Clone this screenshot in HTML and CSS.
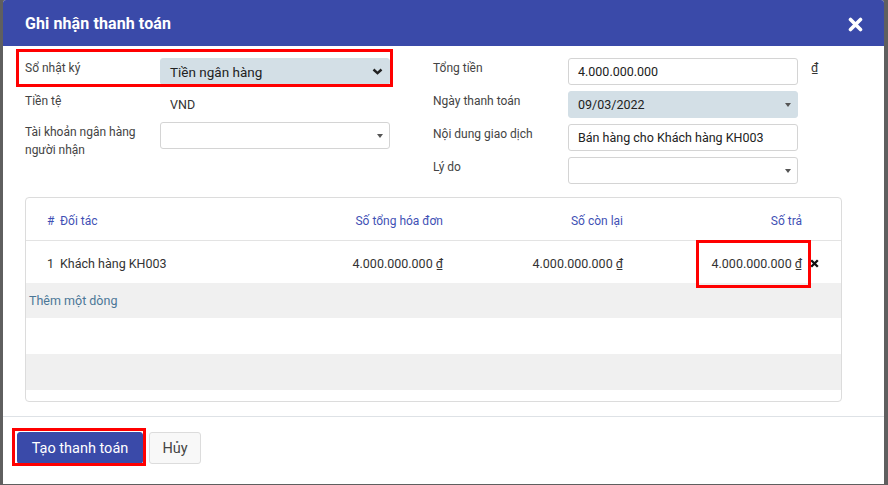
FILE: index.html
```html
<!DOCTYPE html>
<html lang="vi">
<head>
<meta charset="utf-8">
<title>Ghi nhận thanh toán</title>
<link rel="stylesheet" href="styles.css">
</head>
<body>
<div class="modal">
  <div class="modal-header">
    <h4 class="title">Ghi nhận thanh toán</h4>
    <span class="close"><svg width="15" height="15" viewBox="0 0 15 15"><path d="M2.5 2.5 L12.5 12.5 M12.5 2.5 L2.5 12.5" stroke="#fff" stroke-width="3.6" stroke-linecap="round"/></svg></span>
  </div>
  <div class="modal-body">
    <div class="form">
      <div class="col col-left">
        <div class="row hl">
          <label class="lbl">Sổ nhật ký</label>
          <div class="field filled">
            <span>Tiền ngân hàng</span>
            <svg class="chev" width="11" height="7" viewBox="0 0 11 7"><path d="M1.5 1.5 L5.5 5.2 L9.5 1.5" fill="none" stroke="#222" stroke-width="2.4"/></svg>
          </div>
        </div>
        <div class="row row-text">
          <label class="lbl">Tiền tệ</label>
          <div class="value">VND</div>
        </div>
        <div class="row">
          <label class="lbl two">Tài khoản ngân hàng người nhận</label>
          <div class="field"><span></span><span class="caret"></span></div>
        </div>
      </div>
      <div class="col col-right">
        <div class="row">
          <label class="lbl">Tổng tiền</label>
          <div class="field"><span>4.000.000.000</span></div>
          <span class="cur">₫</span>
        </div>
        <div class="row">
          <label class="lbl">Ngày thanh toán</label>
          <div class="field filled"><span>09/03/2022</span><span class="caret"></span></div>
        </div>
        <div class="row">
          <label class="lbl">Nội dung giao dịch</label>
          <div class="field"><span>Bán hàng cho Khách hàng KH003</span></div>
        </div>
        <div class="row">
          <label class="lbl">Lý do</label>
          <div class="field"><span></span><span class="caret"></span></div>
        </div>
      </div>
    </div>

    <div class="card">
      <div class="trow thead">
        <div class="c-num">#</div>
        <div class="c-partner">Đối tác</div>
        <div class="c-amt c-total">Số tổng hóa đơn</div>
        <div class="c-amt c-rest">Số còn lại</div>
        <div class="c-amt c-pay">Số trả</div>
        <div class="c-del"></div>
      </div>
      <div class="trow tdata">
        <div class="c-num">1</div>
        <div class="c-partner">Khách hàng KH003</div>
        <div class="c-amt c-total">4.000.000.000 ₫</div>
        <div class="c-amt c-rest">4.000.000.000 ₫</div>
        <div class="c-amt c-pay hl-cell">4.000.000.000 ₫</div>
        <div class="c-del"><svg width="9" height="9" viewBox="0 0 9 9"><path d="M1.2 1.2 L7.8 7.8 M7.8 1.2 L1.2 7.8" stroke="#111" stroke-width="2.3"/></svg></div>
      </div>
      <div class="trow tadd"><span class="add-link">Thêm một dòng</span></div>
      <div class="trow tempty"></div>
      <div class="trow tempty gray"></div>
    </div>
  </div>
  <div class="modal-footer">
    <button class="btn btn-primary hl-btn">Tạo thanh toán</button>
    <button class="btn btn-light">Hủy</button>
  </div>
</div>
</body>
</html>
```

FILE: styles.css
```css
* { box-sizing: border-box; }
html, body { margin: 0; height: 100%; }
body {
  background: #5f5f5f;
  font-family: Roboto, "Liberation Sans", sans-serif;
  font-size: 12.5px;
  color: #333;
  overflow: hidden;
}
.modal {
  margin-left: 3px;
  width: 881px;
  height: 484px;
  background: #fff;
  border-radius: 3px 3px 0 0;
  display: flex;
  flex-direction: column;
}
.modal-header {
  height: 46px;
  flex: none;
  background: #3a4aa9;
  border-radius: 3px 3px 0 0;
  display: flex;
  align-items: center;
  justify-content: space-between;
  padding: 0 21px 0 22px;
}
.title {
  margin: 0;
  color: #fff;
  font-size: 16px;
  font-weight: 700;
  letter-spacing: 0.1px;
}
.close { display: flex; margin-top: 2px; }

.modal-body {
  flex: 1;
  padding: 12px 42px 0 22px;
}
.form {
  display: flex;
  gap: 43px;
}
.col {
  display: flex;
  flex-direction: column;
  gap: 6px;
}
.col-left { width: 365px; }
.row {
  display: grid;
  grid-template-columns: 135px 230px;
  align-items: start;
  min-height: 27px;
}
.col-right .row { grid-template-columns: 135px 230px auto; }
.row-text { min-height: 25px; height: 25px; }
.lbl {
  color: #444;
  font-size: 12px;
  line-height: 18px;
  padding-top: 1px;
}
.lbl.two { max-width: 125px; }
.field {
  height: 27px;
  border: 1px solid #d4d4d4;
  border-radius: 3px;
  display: flex;
  align-items: center;
  justify-content: space-between;
  padding: 0 6px 0 9px;
  font-size: 12.5px;
  color: #222;
  background: #fff;
}
.field.filled {
  background: #d3dfe6;
  border-color: #d3dfe6;
}
.col-left .field.filled span { font-size: 13.5px; }
.value {
  padding: 5px 0 0 10px;
  line-height: 18px;
  font-size: 12.5px;
  color: #333;
}
.caret {
  width: 0; height: 0;
  border-left: 3.5px solid transparent;
  border-right: 3.5px solid transparent;
  border-top: 4px solid #555;
}
.cur {
  padding: 2px 0 0 13px;
  font-size: 12.5px;
  color: #333;
}
.hl, .hl-cell, .hl-btn { position: relative; }
.hl::after {
  content: "";
  position: absolute;
  left: -9px; right: -3px; top: -9px; bottom: -2px;
  border: 3px solid #ff0000;
  pointer-events: none;
}

.card {
  margin-top: 13px;
  width: 817px;
  height: 205px;
  border: 1px solid #dcdcdc;
  border-radius: 4px;
}
.trow {
  display: grid;
  grid-template-columns: 34px 233px 150px 180px 179px 1fr;
  align-items: stretch;
}
.trow > div {
  display: flex;
  align-items: center;
}
.c-num { padding-left: 21px; }
.trow > .c-amt { justify-content: flex-end; }
.trow > .c-del { padding-left: 8px; }
.thead {
  height: 43px;
  border-bottom: 1px solid #e3e3e3;
  color: #3f51b5;
  font-size: 12px;
  padding-top: 4px;
}
.tdata {
  height: 42px;
  font-size: 12.5px;
  color: #333;
}
.tdata > div { padding-top: 3px; }
.tadd {
  height: 35px;
  background: #f0f0f0;
  display: flex;
  align-items: center;
  padding-left: 3px;
}
.add-link { color: #4b7797; font-size: 12.5px; }
.tempty { height: 36px; }
.tempty.gray { background: #f0f0f0; }
.hl-cell::after {
  content: "";
  position: absolute;
  right: -9px; width: 109px; top: -1px; bottom: -5px;
  border: 3px solid #ff0000;
  pointer-events: none;
}

.modal-footer {
  flex: none;
  border-top: 1px solid #dee2e6;
  padding: 15px 14px 20px;
  display: flex;
  gap: 6px;
  align-items: center;
}
.btn {
  height: 32px;
  font-family: Roboto, "Liberation Sans", sans-serif;
  border-radius: 3px;
  cursor: pointer;
}
.btn-primary {
  width: 126px;
  background: #3a4aa9;
  border: 1px solid #3a4aa9;
  color: #fff;
  font-size: 14.5px;
}
.btn-light {
  width: 52px;
  background: #f8f8f8;
  border: 1px solid #dcdcdc;
  color: #444;
  font-size: 14.5px;
}
.hl-btn::after {
  content: "";
  position: absolute;
  left: -6px; right: -4px; top: -5px; bottom: -3px;
  border: 3px solid #ff0000;
  pointer-events: none;
}
```
